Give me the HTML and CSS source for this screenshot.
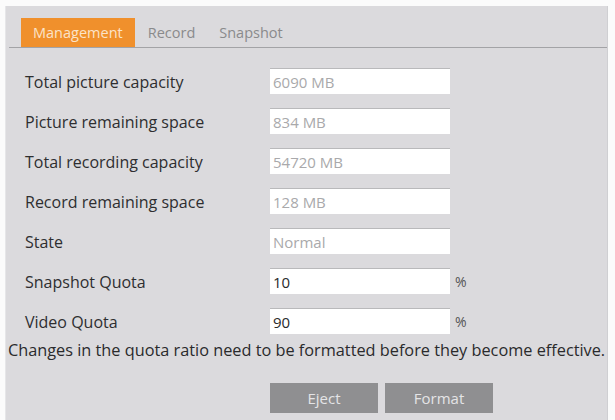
FILE: index.html
```html
<!DOCTYPE html>
<html lang="en">
<head>
    <meta charset="UTF-8">
    <title>Storage Management</title>
    <link rel="stylesheet" href="styles.css">
</head>
<body>

<div class="panel">
    <div class="tabs">
        <span class="tab active">Management</span>
        <span class="tab">Record</span>
        <span class="tab">Snapshot</span>
    </div>

    <div class="form">
        <div class="row">
            <label>Total picture capacity</label>
            <input type="text" value="6090 MB" disabled>
        </div>
        <div class="row">
            <label>Picture remaining space</label>
            <input type="text" value="834 MB" disabled>
        </div>
        <div class="row">
            <label>Total recording capacity</label>
            <input type="text" value="54720 MB" disabled>
        </div>
        <div class="row">
            <label>Record remaining space</label>
            <input type="text" value="128 MB" disabled>
        </div>
        <div class="row">
            <label>State</label>
            <input type="text" value="Normal" disabled>
        </div>
        <div class="row">
            <label>Snapshot Quota</label>
            <input type="text" value="10">
            <span class="unit">%</span>
        </div>
        <div class="row">
            <label>Video Quota</label>
            <input type="text" value="90">
            <span class="unit">%</span>
        </div>
    </div>

    <p class="note">Changes in the quota ratio need to be formatted before they become effective.</p>

    <div class="buttons">
        <button type="button">Eject</button>
        <button type="button">Format</button>
    </div>
</div>

</body>
</html>
```

FILE: styles.css
```css
* {
    box-sizing: border-box;
}
body {
    margin: 0;
    background: #fbfbfb;
    font-family: 'Open Sans', 'Liberation Sans', sans-serif;
    color: #333;
    height: 420px;
    overflow: hidden;
}
.panel {
    margin: 6px 7px 0 5px;
    height: 414px;
    background: #dbdadd;
    border-left: 1px solid #e6e6e8;
    border-right: 1px solid #cfcfd2;
}
.tabs {
    display: flex;
    align-items: stretch;
    margin: 0 0 0 3px;
    padding: 12px 0 0 12px;
    border-bottom: 1px solid #a3a3a6;
    height: 42px;
}
.tab {
    display: flex;
    align-items: center;
    padding: 0 12px;
    font-size: 14.5px;
    color: #8a8a8c;
}
.tab.active {
    background: #f0902c;
    color: #fbe3c8;
    margin-right: 1px;
}
.form {
    padding: 20px 0 0 19px;
}
.row {
    display: flex;
    align-items: center;
    height: 26px;
    margin-bottom: 14px;
}
.row:last-child {
    margin-bottom: 5px;
}
.row label {
    width: 245px;
    font-size: 16px;
    color: #2e2e30;
    padding-top: 1px;
}
.row input {
    width: 180px;
    height: 26px;
    padding: 0 3px;
    border: none;
    border-top: 1px solid #b9b9bb;
    background: #fff;
    font-family: inherit;
    font-size: 15px;
    color: #2a2a2a;
}
.row input:disabled {
    color: #a9a9ab;
    background: #fff;
}
.unit {
    margin-left: 5px;
    font-size: 14px;
    color: #555;
}
.note {
    margin: 0;
    padding: 0 0 0 2px;
    font-size: 16.3px;
    line-height: 22px;
    color: #2a2a2c;
    white-space: nowrap;
}
.buttons {
    display: flex;
    gap: 7px;
    padding: 22px 0 0 264px;
}
.buttons button {
    width: 108px;
    height: 30px;
    border: none;
    background: #8f8f91;
    color: #e4e4e6;
    font-family: inherit;
    font-size: 15px;
}
```
